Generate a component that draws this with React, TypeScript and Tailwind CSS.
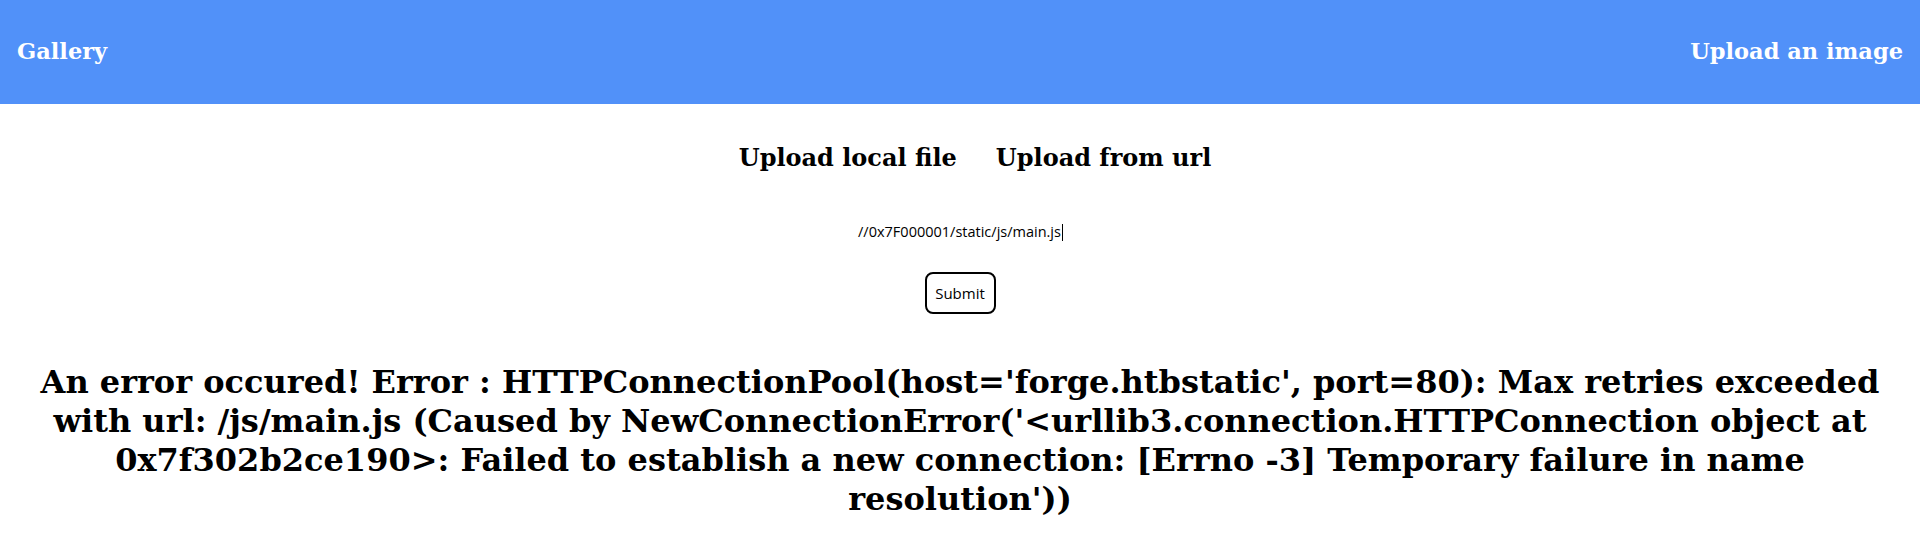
import { useState } from 'react';

const serif = { fontFamily: '"DejaVu Serif", serif' };
const sans = { fontFamily: '"Open Sans", sans-serif' };

export default function App() {
  const [url, setUrl] = useState('//0x7F000001/static/js/main.js');
  const message =
    "An error occured! Error : HTTPConnectionPool(host='forge.htbstatic', port=80): Max retries exceeded with url: /js/main.js (Caused by NewConnectionError('<urllib3.connection.HTTPConnection object at 0x7f302b2ce190>: Failed to establish a new connection: [Errno -3] Temporary failure in name resolution'))";
  return (
    <div className="min-h-screen bg-white text-black" style={serif}>
      <header className="flex items-center justify-between h-[104px] px-[17px] bg-[#5191f9] text-white font-bold text-[22.5px]">
        <a href="#">Gallery</a>
        <a href="#">Upload an image</a>
      </header>
      <main className="flex flex-col items-center">
        <div className="flex gap-[39px] mt-[36px] ml-[30px] text-[24px] font-bold">
          <a href="#">Upload local file</a>
          <a href="#">Upload from url</a>
        </div>
        <div className="mt-[46px] flex items-center h-[20px]" style={sans}>
          <input
            value={url}
            onChange={e => setUrl(e.target.value)}
            size={url.length}
            className="text-center text-[14.5px] outline-none border-0 p-0 w-[205px]"
          />
          <span className="w-px h-[17px] bg-black" />
        </div>
        <button
          className="mt-[30px] w-[71px] h-[42px] rounded-lg border-2 border-black text-[15px]"
          style={sans}
        >
          Submit
        </button>
        <h1 className="mt-[49px] px-[20px] text-center text-[32px] leading-[39px] font-bold">{message}</h1>
      </main>
    </div>
  );
}
